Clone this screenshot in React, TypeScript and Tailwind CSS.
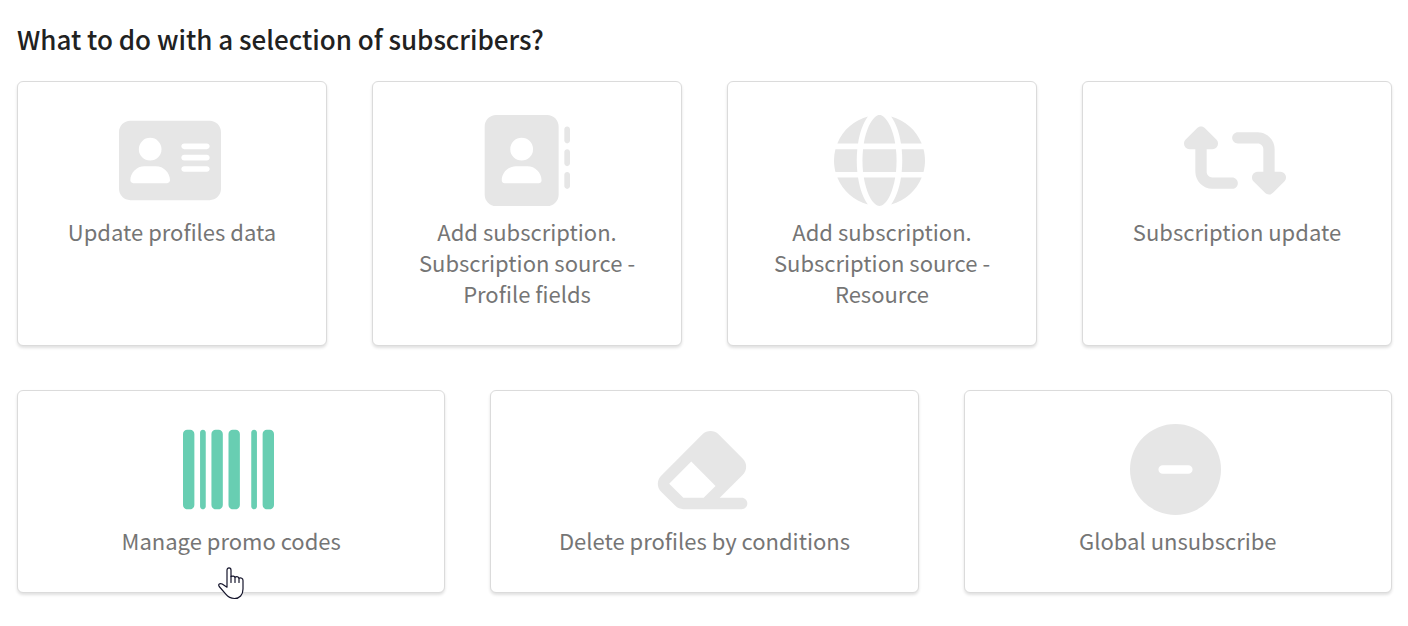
import type { IconType } from "react-icons";
import {
  FaAddressBook,
  FaAddressCard,
  FaBarcode,
  FaCircleMinus,
  FaEraser,
  FaGlobe,
  FaRetweet,
} from "react-icons/fa6";

type Action = {
  label: string;
  icon: IconType;
  iconWidth: string;
  active?: boolean;
};

const profileActions: Action[] = [
  { label: "Update profiles data", icon: FaAddressCard, iconWidth: "w-[102px]" },
  { label: "Add subscription. Subscription source - Profile fields", icon: FaAddressBook, iconWidth: "w-[91px]" },
  { label: "Add subscription. Subscription source - Resource", icon: FaGlobe, iconWidth: "w-[91px]" },
  { label: "Subscription update", icon: FaRetweet, iconWidth: "w-[102px]" },
];

const bulkActions: Action[] = [
  { label: "Manage promo codes", icon: FaBarcode, iconWidth: "w-[91px]", active: true },
  { label: "Delete profiles by conditions", icon: FaEraser, iconWidth: "w-[102px]" },
  { label: "Global unsubscribe", icon: FaCircleMinus, iconWidth: "w-[91px]" },
];

function HandPointer() {
  return (
    <svg
      viewBox="0 0 26 33"
      className="pointer-events-none absolute top-44 left-1/2 -ml-[13px] h-[33px] w-[26px]"
      fill="white"
      stroke="#14142b"
      strokeWidth="1.2"
      strokeLinejoin="round"
      strokeLinecap="round"
      aria-hidden="true"
    >
      <path d="M9 20.2V3.2C9 .2 13 .2 13 3.2V9.6C14.5 8.7 16.4 9 17 10.2C18.6 9.4 20.4 10 21 11.2C23 10.5 25 11.4 25 13.4V22C25 28 21.500 31.500 16.500 31.500C12.500 31.500 10 30 7.800 27.200L1.200 19.500C-.2 17.200 1.800 16 4.200 17Z" />
      <path d="M13 9.500V15.500M17 10.200V15.500M21 11.200V15.500" fill="none" />
    </svg>
  );
}

function ActionCard({ label, icon: Icon, iconWidth, active = false }: Action) {
  return (
    <button
      type="button"
      className="relative flex cursor-pointer flex-col items-center rounded-md border border-[#dbdbdb] bg-white px-8 pt-[33px] pb-9 shadow-[0_2px_3px_rgba(0,0,0,0.12)]"
    >
      <Icon
        aria-hidden="true"
        className={`mr-[5px] h-[91px] shrink-0 ${iconWidth} ${active ? "text-[#68ceb2]" : "text-[#e6e6e6]"}`}
      />
      <span className="mt-2.5 text-center text-[22px] leading-[31px] text-[#757575]">{label}</span>
      {active && <HandPointer />}
    </button>
  );
}

export default function App() {
  return (
    <main className="bg-white pt-[21px] pr-4 pb-8 pl-[17px] font-['Source_Sans_Pro','Noto_Sans_CJK_SC',sans-serif]">
      <h1 className="text-[26px] leading-9 font-medium text-[#212121]">
        What to do with a selection of subscribers?
      </h1>
      <div className="mt-6 grid grid-cols-4 gap-[45px]">
        {profileActions.map((action) => (
          <ActionCard key={action.label} {...action} />
        ))}
      </div>
      <div className="mt-11 grid grid-cols-3 gap-[45px]">
        {bulkActions.map((action) => (
          <ActionCard key={action.label} {...action} />
        ))}
      </div>
    </main>
  );
}
